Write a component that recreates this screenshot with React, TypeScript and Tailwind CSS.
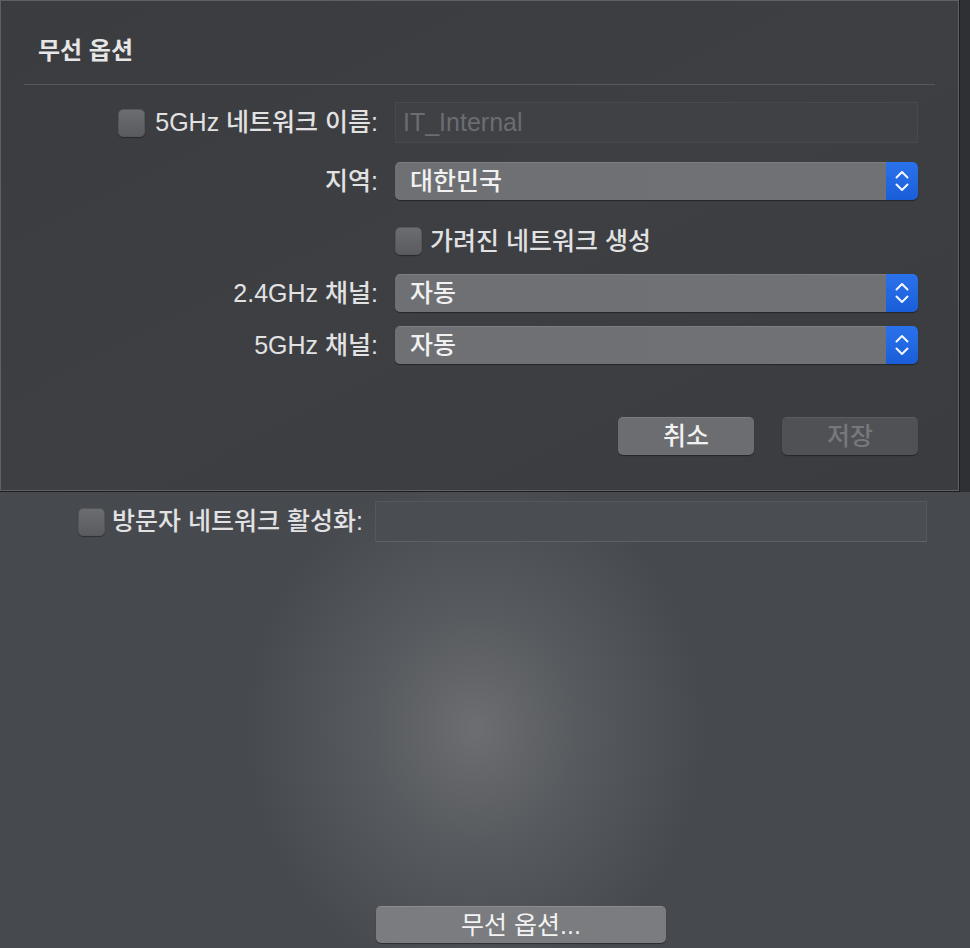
const font = "font-['Liberation_Sans','Noto_Sans_CJK_KR',sans-serif]";

function Checkbox() {
  return (
    <span className="block h-[28px] w-[27px] shrink-0 rounded-[5px] border border-[#55575b] bg-gradient-to-b from-[#6b6d71] to-[#595b5f] shadow-[0_1px_1px_rgba(0,0,0,0.35)]" />
  );
}

function Stepper() {
  return (
    <span className="flex h-full w-[32px] items-center justify-center rounded-r-[5px] bg-gradient-to-b from-[#2a72ec] to-[#195ed8]">
      <svg width="16" height="24" viewBox="0 0 16 24" fill="none" stroke="#f4f7ff" strokeWidth={2} strokeLinecap="round" strokeLinejoin="round">
        <path d="M2.5 8.5 8 3l5.5 5.5" />
        <path d="M2.5 15.5 8 21l5.5-5.5" />
      </svg>
    </span>
  );
}

function Select({ value }: { value: string }) {
  return (
    <div className="flex h-[38px] w-[523px] overflow-hidden rounded-[5px] shadow-[0_1px_1px_rgba(0,0,0,0.4)]">
      <span className="flex flex-1 items-center border-t border-[#7c7e81] bg-gradient-to-r from-[#6e7073] to-[#6f7174] pl-[15px] text-[25px] font-medium text-[#f1f1f1]">
        {value}
      </span>
      <Stepper />
    </div>
  );
}

function Label({ children }: { children: React.ReactNode }) {
  return <span className="whitespace-nowrap text-[25px] leading-none font-medium text-[#e2e2e3]">{children}</span>;
}

export default function App() {
  return (
    <div className={`h-[948px] w-[970px] overflow-hidden bg-[#45484d] ${font}`}>
      <div className="flex h-[492px]">
        <div className="h-full w-[960px] border-r border-b border-[#1c1d1f]">
          <div className="flex h-full flex-col border border-[#5e6064] bg-gradient-to-br from-[#3a3c40] via-[#3d3f43] to-[#3a3c40] px-[23px]">
            <div className="h-[84px] border-b border-[#56585c] pl-[14px] pt-[35px]">
              <h1 className="text-[24px] leading-[30px] font-bold text-[#e6e6e7]">무선 옵션</h1>
            </div>

            <div className="mt-[17px] flex h-[41px] items-center">
              <div className="flex w-[354px] items-center justify-end gap-[10px]">
                <Checkbox />
                <Label>5GHz 네트워크 이름:</Label>
              </div>
              <div className="ml-[17px] flex h-full w-[523px] items-center border border-[#47494d] bg-[#3f4145] pl-[7px] text-[25px] text-[#6b6d71]">
                IT_Internal
              </div>
            </div>

            <div className="mt-[19px] flex items-center">
              <div className="flex w-[354px] justify-end">
                <Label>지역:</Label>
              </div>
              <div className="ml-[17px]">
                <Select value="대한민국" />
              </div>
            </div>

            <div className="mt-[27px] flex h-[28px] items-center gap-[8px] pl-[371px]">
              <Checkbox />
              <Label>가려진 네트워크 생성</Label>
            </div>

            <div className="mt-[19px] flex items-center">
              <div className="flex w-[354px] justify-end">
                <Label>2.4GHz 채널:</Label>
              </div>
              <div className="ml-[17px]">
                <Select value="자동" />
              </div>
            </div>

            <div className="mt-[14px] flex items-center">
              <div className="flex w-[354px] justify-end">
                <Label>5GHz 채널:</Label>
              </div>
              <div className="ml-[17px]">
                <Select value="자동" />
              </div>
            </div>

            <div className="mt-[53px] flex justify-end gap-[28px] pr-[17px]">
              <button className="h-[38px] w-[136px] rounded-[5px] border-t border-[#7a7c7f] bg-[#6b6d70] text-[25px] font-medium text-[#f1f1f1] shadow-[0_1px_1px_rgba(0,0,0,0.4)]">
                취소
              </button>
              <button className="h-[38px] w-[136px] rounded-[5px] border-t border-[#5a5c60] bg-[#4f5155] text-[25px] font-medium text-[#76787c] shadow-[0_1px_1px_rgba(0,0,0,0.4)]">
                저장
              </button>
            </div>
          </div>
        </div>
        <div className="flex-1 bg-[#2e3034]" />
      </div>

      <div className="h-[456px] bg-[radial-gradient(230px_260px_at_49%_52%,#6c6e71_0%,#575a5e_45%,#46494e_100%)]">
        <div className="flex items-center pt-[9px]">
          <div className="flex w-[360px] shrink-0 items-center gap-[7px] pl-[78px]">
            <Checkbox />
            <Label>방문자 네트워크 활성화:</Label>
          </div>
          <div className="ml-[15px] h-[41px] w-[552px] shrink-0 border border-[#55585c] border-b-[#5e6165] bg-[#4a4d52]" />
        </div>
        <div className="mt-[364px] pl-[376px]">
          <button className="h-[37px] w-[290px] rounded-[5px] border-t border-[#8a8c8f] bg-[#7a7c7f] text-[25px] text-[#f3f3f3] shadow-[0_1px_1px_rgba(0,0,0,0.4)]">
            무선 옵션...
          </button>
        </div>
      </div>
    </div>
  );
}
